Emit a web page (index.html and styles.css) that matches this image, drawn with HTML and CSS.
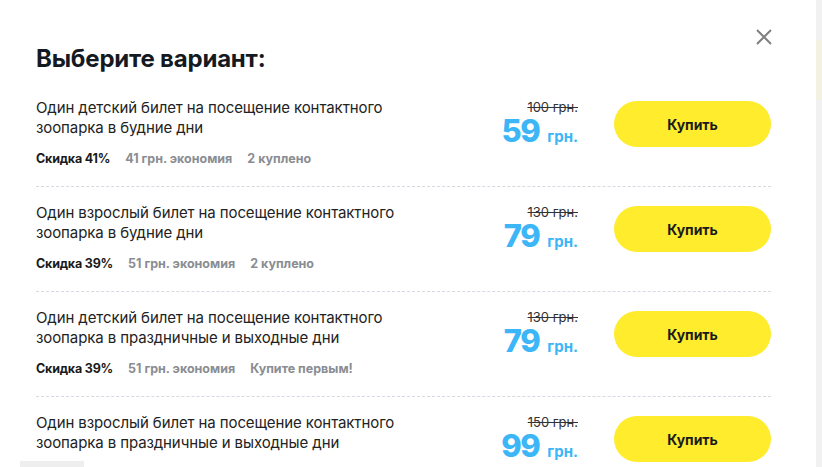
FILE: index.html
```html
<!DOCTYPE html>
<html lang="ru">
<head>
<meta charset="utf-8">
<link rel="stylesheet" href="styles.css">
</head>
<body>
<div class="modal">
  <button class="close" aria-label="Закрыть">
    <svg width="16" height="16" viewBox="0 0 16 16"><path d="M1 1L15 15M15 1L1 15" stroke="#808080" stroke-width="2" fill="none"/></svg>
  </button>
  <h1 class="title">Выберите вариант:</h1>
  <div class="list">
    <div class="item">
      <div class="info">
        <div class="desc">Один детский билет на посещение контактного зоопарка в будние дни</div>
        <div class="meta"><span class="disc">Скидка 41%</span><span>41 грн. экономия</span><span>2 куплено</span></div>
      </div>
      <div class="price"><div class="old">100 грн.</div><div class="new"><span class="num">59</span><span class="cur">грн.</span></div></div>
      <button class="buy">Купить</button>
    </div>
    <div class="item">
      <div class="info">
        <div class="desc">Один взрослый билет на посещение контактного зоопарка в будние дни</div>
        <div class="meta"><span class="disc">Скидка 39%</span><span>51 грн. экономия</span><span>2 куплено</span></div>
      </div>
      <div class="price"><div class="old">130 грн.</div><div class="new"><span class="num">79</span><span class="cur">грн.</span></div></div>
      <button class="buy">Купить</button>
    </div>
    <div class="item">
      <div class="info">
        <div class="desc">Один детский билет на посещение контактного зоопарка в праздничные и выходные дни</div>
        <div class="meta"><span class="disc">Скидка 39%</span><span>51 грн. экономия</span><span>Купите первым!</span></div>
      </div>
      <div class="price"><div class="old">130 грн.</div><div class="new"><span class="num">79</span><span class="cur">грн.</span></div></div>
      <button class="buy">Купить</button>
    </div>
    <div class="item">
      <div class="info">
        <div class="desc">Один взрослый билет на посещение контактного зоопарка в праздничные и выходные дни</div>
        <div class="meta"><span class="disc">Скидка 39%</span><span>51 грн. экономия</span><span>2 куплено</span></div>
      </div>
      <div class="price"><div class="old">150 грн.</div><div class="new"><span class="num">99</span><span class="cur">грн.</span></div></div>
      <button class="buy">Купить</button>
    </div>
  </div>
  <div class="scrollhint"></div>
</div>
<div class="backdrop"><div class="band"></div></div>
</body>
</html>
```
FILE: styles.css
```css
* { box-sizing: border-box; }
html, body { margin: 0; height: 100%; }
body {
  display: flex;
  background: #f1f1f1;
  font-family: Inter, "Noto Sans", sans-serif;
  color: #1f1f1f;
  overflow: hidden;
}
.modal {
  position: relative;
  width: 816px;
  height: 467px;
  flex: none;
  background: #fff;
  padding: 44px 45px 0 36px;
  overflow: hidden;
}
.backdrop {
  flex: 1;
  padding-top: 40px;
}
.band { height: 60px; background: #f3f1e1; }
.close {
  position: absolute;
  top: 29px;
  left: 756px;
  width: 16px;
  height: 16px;
  padding: 0;
  border: 0;
  background: none;
  display: flex;
}
.title {
  margin: 0 0 8px;
  font-size: 24px;
  line-height: 30px;
  font-weight: 700;
  color: #151a22;
  letter-spacing: -0.2px;
}
.item {
  display: grid;
  grid-template-columns: 1fr auto 157px;
  column-gap: 36px;
  align-items: start;
  padding: 16px 0 19px;
  border-bottom: 1px dashed #d6d9e2;
}
.desc {
  font-size: 15px;
  line-height: 20px;
  color: #222;
  width: 372px;
  letter-spacing: -0.1px;
}
.meta {
  margin-top: 13px;
  display: flex;
  gap: 15px;
  font-size: 12.5px;
  line-height: 16px;
  font-weight: 700;
  color: #8a8d92;
}
.meta .disc { color: #1a1a1a; letter-spacing: -0.2px; }
.price {
  margin-top: 1px;
  text-align: right;
}
.old {
  font-size: 13px;
  line-height: 16px;
  color: #333;
  text-decoration: line-through;
}
.new {
  display: flex;
  align-items: baseline;
  justify-content: flex-end;
  gap: 8px;
  color: #3cb6f7;
  font-weight: 800;
}
.num { font-size: 31px; line-height: 31px; letter-spacing: -1.5px; }
.cur { font-size: 15px; font-weight: 700; }
.buy {
  margin-top: 3px;
  height: 46px;
  border: 0;
  border-radius: 23px;
  background: #ffec2d;
  font-family: inherit;
  font-size: 14px;
  font-weight: 700;
  color: #1a1a1a;
}
.scrollhint {
  position: absolute;
  left: 20px;
  bottom: 0;
  width: 64px;
  height: 6px;
  background: #eeeeee;
}
```
